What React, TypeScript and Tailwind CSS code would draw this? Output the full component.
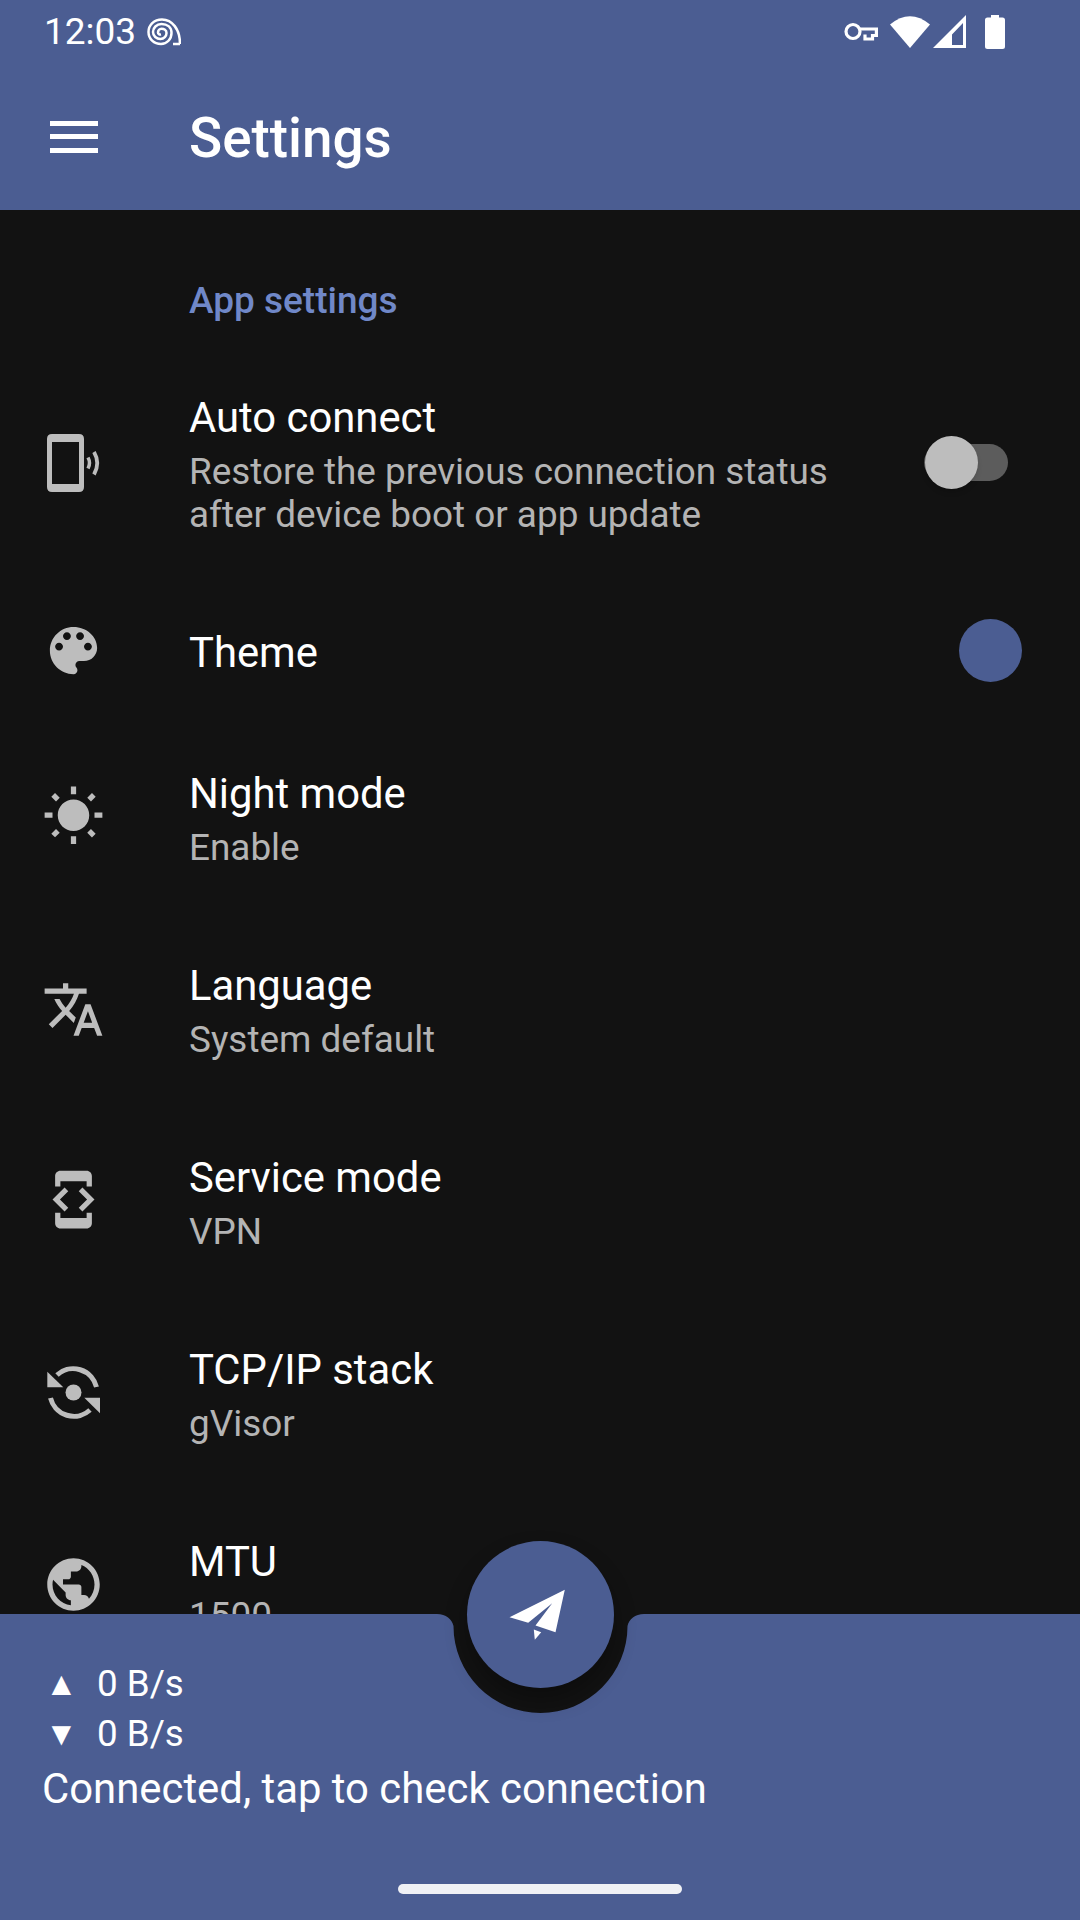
function Mi({ d, top = 0 }: { d: string; top?: number }) {
  return (
    <svg width="63" height="63" viewBox="0 0 24 24" fill="#bdbdbd" style={{ marginTop: top }}>
      <path d={d} fillRule="evenodd" />
    </svg>
  );
}

const PhoneIcon = () => (
  <svg width="63" height="63" viewBox="0 0 63 63" style={{ marginTop: -2 }}>
    <path
      fillRule="evenodd"
      fill="#bdbdbd"
      d="M10 2 H37 Q42 2 42 7 V55 Q42 60 37 60 H10 Q5 60 5 55 V7 Q5 2 10 2 Z M10 10 V52 H37 V10 Z"
    />
    <path d="M46 25.5 Q49 31 46 36.5" fill="none" stroke="#bdbdbd" strokeWidth="3.5" />
    <path d="M52 20 Q58.5 31 52 42.5" fill="none" stroke="#bdbdbd" strokeWidth="3.8" />
  </svg>
);

const palette = "M12 3c-4.97 0-9 4.03-9 9s4.03 9 9 9c.83 0 1.5-.67 1.5-1.5 0-.39-.15-.74-.39-1.01-.23-.26-.38-.61-.38-.99 0-.83.67-1.5 1.5-1.5H16c2.76 0 5-2.24 5-5 0-4.42-4.03-8-9-8zm-5.5 9c-.83 0-1.5-.67-1.5-1.5S5.67 9 6.5 9 8 9.67 8 10.5 7.33 12 6.5 12zm3-4C8.67 8 8 7.33 8 6.5S8.67 5 9.5 5s1.5.67 1.5 1.5S10.33 8 9.5 8zm5 0c-.83 0-1.5-.67-1.5-1.5S13.67 5 14.5 5s1.5.67 1.5 1.5S15.33 8 14.5 8zm3 4c-.83 0-1.5-.67-1.5-1.5S16.67 9 17.5 9s1.5.67 1.5 1.5-.67 1.5-1.5 1.5z";
const sunny = "M6.76 4.84l-1.8-1.79-1.41 1.41 1.79 1.79 1.42-1.41zM4 10.5H1v2h3v-2zm9-9.95h-2V3.5h2V.55zm7.45 3.91l-1.41-1.41-1.79 1.79 1.41 1.41 1.79-1.79zm-3.21 13.7l1.79 1.8 1.41-1.41-1.8-1.79-1.4 1.4zM20 10.5v2h3v-2h-3zm-8-5c-3.31 0-6 2.69-6 6s2.69 6 6 6 6-2.69 6-6-2.69-6-6-6zm-1 16.95h2V19.5h-2v2.95zm-7.45-3.91l1.41 1.41 1.79-1.8-1.41-1.41-1.79 1.8z";
const translate = "M12.87 15.07l-2.54-2.51.03-.03c1.74-1.94 2.98-4.17 3.71-6.53H17V4h-7V2H8v2H1v1.99h11.17C11.5 7.92 10.44 9.75 9 11.35 8.07 10.32 7.3 9.19 6.69 8h-2c.73 1.63 1.73 3.17 2.98 4.56l-5.09 5.02L4 19l5-5 3.11 3.11.76-2.04zM18.5 10h-2L12 22h2l1.12-3h4.75L21 22h2l-4.5-12zm-2.62 7l1.62-4.33L19.12 17h-3.24z";
const devMode = "M7 5h10v2h2V3c0-1.1-.9-1.99-2-1.99L7 1c-1.1 0-2 .9-2 2v4h2V5zm8.41 11.59L20 12l-4.59-4.59L14 8.83 17.17 12 14 15.17l1.41 1.42zM10 15.17L6.83 12 10 8.83 8.59 7.41 4 12l4.59 4.59L10 15.17zM17 19H7v-2H5v4c0 1.1.9 2 2 2h10c1.1 0 2-.9 2-2v-4h-2v2z";
const globe = "M12 2C6.48 2 2 6.48 2 12s4.48 10 10 10 10-4.48 10-10S17.52 2 12 2zm-1 17.93c-3.95-.49-7-3.85-7-7.93 0-.62.08-1.21.21-1.79L9 15v1c0 1.1.9 2 2 2v1.93zm6.9-2.54c-.26-.81-1-1.39-1.9-1.39h-1v-3c0-.55-.45-1-1-1H8v-2h2c.55 0 1-.45 1-1V7h2c1.1 0 2-.9 2-2v-.41c2.93 1.19 5 4.06 5 7.41 0 2.08-.8 3.97-2.1 5.39z";

const RotateIcon = () => (
  <svg width="63" height="63" viewBox="0 0 63 63" style={{ marginTop: -5 }}>
    <circle cx="31.5" cy="31.5" r="8" fill="#bdbdbd" />
    <path d="M15 14 A24 24 0 0 1 54.5 26" fill="none" stroke="#bdbdbd" strokeWidth="5" />
    <path d="M48 49 A24 24 0 0 1 8.5 37" fill="none" stroke="#bdbdbd" strokeWidth="5" />
    <path d="M5.3 10.7 V26.3 H21.3 Z" fill="#bdbdbd" />
    <path d="M58 36.7 V52.3 L42.3 36.7 Z" fill="#bdbdbd" />
  </svg>
);

function Row({
  icon,
  title,
  sub,
  h,
  trailing,
}: {
  icon: React.ReactNode;
  title: string;
  sub?: React.ReactNode;
  h: string;
  trailing?: React.ReactNode;
}) {
  return (
    <div className={`flex items-center shrink-0 ${h}`}>
      <div className="w-[189px] pl-[42px] shrink-0 flex items-center">{icon}</div>
      <div className="flex-1 min-w-0">
        <div className="text-[41.8px] leading-[50px] text-white">{title}</div>
        {sub && <div className="mt-[7px] text-[36.9px] leading-[43px] text-[#b4b4b4]">{sub}</div>}
      </div>
      {trailing}
    </div>
  );
}

export default function App() {
  return (
    <div className="relative w-[1080px] h-[1920px] overflow-hidden bg-[#121212] flex flex-col font-['Roboto',sans-serif]">
      <header className="h-[210px] shrink-0 bg-[#4b5d92] flex flex-col text-white">
        <div className="h-[63px] flex items-center justify-between pl-[44px] pr-[75px]">
          <div className="flex items-center gap-[11px]">
            <span className="text-[37px] leading-[63px]">12:03</span>
            <svg width="34" height="28" viewBox="0 0 34 28" fill="none" stroke="#fff" strokeWidth="2.5">
              <path d="M26 26 H33 M33 26 C33 11 25 1.5 15 1.5 C7 1.5 1.5 7 1.5 14 C1.5 21 7 26 14 26 C20 26 24.5 21 24.5 15 C24.5 9 20 6 14.5 6 C9.5 6 6 10 6 14 C6 18 9.5 21 13.5 21 C17 21 19.5 18 19.5 15 C19.5 12 17 10.8 14.5 10.8 C12.5 10.8 11 12.5 11 14.5 C11 16 12.5 16.8 14 16.5" />
            </svg>
          </div>
          <div className="flex items-center">
            <svg width="34" height="19" viewBox="0 0 34 19" className="mr-[12px]" fill="none" stroke="#fff" strokeWidth="3.2">
              <circle cx="9" cy="9.5" r="7" />
              <path d="M16 7 H32.4 V13.5 H28.5 V17 H21 V12.5" />
            </svg>
            <svg width="40" height="34" viewBox="0 0 40 34" fill="#fff">
              <path d="M0 9.5 Q20 -7 40 9.5 L20 33 Z" />
            </svg>
            <svg width="33" height="33" viewBox="0 0 33 33" className="mr-[19px] ml-[3px]">
              <path fillRule="evenodd" fill="#fff" d="M33 0 V33 H0 Z M19 30 H30 V8 L19 19.5 Z" />
            </svg>
            <svg width="20" height="34" viewBox="0 0 20 34" fill="#fff">
              <path d="M6 0 H14 V2.5 H17.5 Q20 2.5 20 5 V31.5 Q20 34 17.5 34 H2.5 Q0 34 0 31.5 V5 Q0 2.5 2.5 2.5 H6 Z" />
            </svg>
          </div>
        </div>
        <div className="flex-1 flex items-center">
          <div className="w-[189px] pl-[50px] shrink-0">
            <div className="w-[48px] h-[32px] flex flex-col justify-between">
              <div className="h-[5px] bg-white" />
              <div className="h-[5px] bg-white" />
              <div className="h-[5px] bg-white" />
            </div>
          </div>
          <h1 className="text-[54.8px] leading-[56px] font-medium text-white pt-[2px]">Settings</h1>
        </div>
      </header>

      <main className="flex-1 min-h-0 overflow-hidden flex flex-col">
        <div className="h-[136px] shrink-0 pl-[189px] pt-[69px] text-[37px] leading-[44px] font-medium text-[#7088c8]">
          App settings
        </div>
        <Row
          h="h-[236px]"
          icon={<PhoneIcon />}
          title="Auto connect"
          sub={
            <>
              Restore the previous connection status
              <br />
              after device boot or app update
            </>
          }
          trailing={
            <div className="relative w-[84px] h-[37px] mr-[72px] -mt-[4px] rounded-full bg-[#5c5c5c] shrink-0">
              <div className="absolute left-[1px] -top-[8px] w-[53px] h-[53px] rounded-full bg-[#bdbdbd] shadow-md" />
            </div>
          }
        />
        <Row
          h="h-[141px]"
          icon={<Mi d={palette} top={-4} />}
          title="Theme"
          trailing={<div className="w-[63px] h-[63px] mr-[58px] -mt-[4px] rounded-full bg-[#4b5d92] shrink-0" />}
        />
        <Row h="h-[192px]" icon={<Mi d={sunny} top={-6} />} title="Night mode" sub="Enable" />
        <Row h="h-[192px]" icon={<Mi d={translate} top={-3} />} title="Language" sub="System default" />
        <Row h="h-[192px]" icon={<Mi d={devMode} top={-8} />} title="Service mode" sub="VPN" />
        <Row h="h-[192px]" icon={<RotateIcon />} title="TCP/IP stack" sub="gVisor" />
        <Row h="h-[192px]" icon={<Mi d={globe} top={-5} />} title="MTU" sub="1500" />
      </main>

      <footer className="h-[306px] shrink-0 bg-[#4b5d92] text-white relative pl-[42px] pt-[45px]">
        <div className="flex items-center h-[50px] text-[36.75px]">
          <span className="w-[55px] pl-[3px] text-[33px] leading-[50px]">▲</span>
          <span>0 B/s</span>
        </div>
        <div className="flex items-center h-[50px] text-[36.75px]">
          <span className="w-[55px] pl-[3px] text-[33px] leading-[50px]">▼</span>
          <span>0 B/s</span>
        </div>
        <div className="text-[41.85px] leading-[60px]">Connected, tap to check connection</div>
        <div className="absolute left-[398px] bottom-[26px] w-[284px] h-[10px] rounded-full bg-[#f0f1f5]" />
      </footer>

      <svg width="240" height="110" viewBox="0 0 240 110" className="absolute left-[420px] top-[1612px]">
        <path
          fill="#121212"
          d="M0 0 H240 V2 H224 C215 2 209 7 207.5 14 A87 87 0 0 1 33.5 14 C32 7 26 2 17 2 H0 Z"
        />
      </svg>
      <div className="absolute left-[467px] top-[1541px] w-[147px] h-[147px] rounded-full bg-[#4b5d92] shadow-[0_12px_22px_rgba(0,0,0,0.3)] flex items-center justify-center">
        <svg width="80" height="60" viewBox="0 0 80 60" fill="#fff">
          <path d="M8.5 32.2 L63.8 4.8 L54.5 47.2 L34.5 40.5 L51.2 18.2 L27.2 37.8 Z" />
          <path d="M32.8 44.5 L40.2 47.2 L33.8 54.8 Z" />
        </svg>
      </div>
    </div>
  );
}
